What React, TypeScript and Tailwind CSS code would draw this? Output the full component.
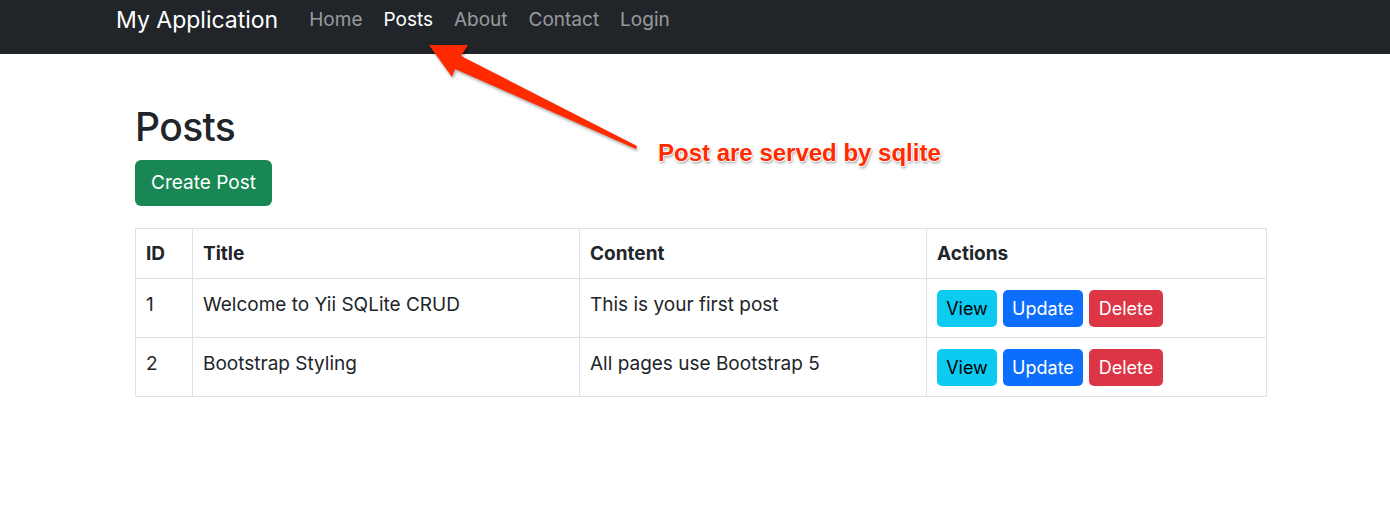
const navLinks = [
  { label: "Home", active: false },
  { label: "Posts", active: true },
  { label: "About", active: false },
  { label: "Contact", active: false },
  { label: "Login", active: false },
];

type Post = {
  id: number;
  title: string;
  content: string;
};

const posts: Post[] = [
  { id: 1, title: "Welcome to Yii SQLite CRUD", content: "This is your first post" },
  { id: 2, title: "Bootstrap Styling", content: "All pages use Bootstrap 5" },
];

const Navbar = () => (
  <nav className="h-[54px] bg-[#212529] flex items-start">
    <div className="flex items-center gap-[31px] pl-[116px] pt-[5px]">
      <span className="text-[23px] leading-[30px] text-white">My Application</span>
      <ul className="flex items-center gap-[21px] text-[19px] leading-[30px]">
        {navLinks.map((link) => (
          <li
            key={link.label}
            className={link.active ? "text-white" : "text-[#ffffff8c]"}
          >
            {link.label}
          </li>
        ))}
      </ul>
    </div>
  </nav>
);

const Annotation = () => (
  <>
    <svg
      className="absolute left-0 top-0 pointer-events-none [filter:drop-shadow(1px_2px_1.5px_rgba(0,0,0,0.35))]"
      width={1390}
      height={523}
      viewBox="0 0 1390 523"
    >
      <polygon
        points="429,45 468,45 461,56 637,146 636,149 455,69 452,77"
        fill="#ff2a00"
      />
    </svg>
    <div
      className="absolute left-[658px] top-[138px] text-[24px] leading-[30px] font-bold text-[#ff2a00] [font-family:'Liberation_Sans',Arial,sans-serif] [text-shadow:0_0_1px_#fff,1px_0_0_#fff,-1px_0_0_#fff,0_1px_0_#fff,0_-1px_0_#fff,1px_2px_3px_rgba(0,0,0,0.45)]"
    >
      Post are served by sqlite
    </div>
  </>
);

const App = () => {
  return (
    <div className="relative w-[1390px] h-[523px] bg-white text-[#212529] [font-family:Inter,'Noto_Sans',sans-serif] overflow-hidden">
      <Navbar />
      <main className="pl-[135px] pr-[124px]">
        <h1 className="mt-[49px] text-[39px] leading-[48px] font-medium tracking-[-0.6px]">
          Posts
        </h1>
        <button className="mt-[9px] h-[46px] w-[137px] rounded-[6px] bg-[#198754] text-white text-[19px]">
          Create Post
        </button>
        <table className="mt-[22px] w-[1131px] table-fixed border-collapse text-[19px] leading-[27px]">
          <colgroup>
            <col className="w-[57px]" />
            <col className="w-[387px]" />
            <col className="w-[347px]" />
            <col className="w-[340px]" />
          </colgroup>
          <thead>
            <tr>
              {["ID", "Title", "Content", "Actions"].map((h) => (
                <th
                  key={h}
                  className="border border-[#dee2e6] px-[10px] pt-[11px] pb-[11px] text-left align-top font-bold text-[19px]"
                >
                  {h}
                </th>
              ))}
            </tr>
          </thead>
          <tbody>
            {posts.map((post) => (
              <tr key={post.id}>
                <td className="border border-[#dee2e6] px-[10px] pt-[12px] pb-[9px] align-top">
                  {post.id}
                </td>
                <td className="border border-[#dee2e6] px-[10px] pt-[12px] pb-[9px] align-top">
                  {post.title}
                </td>
                <td className="border border-[#dee2e6] px-[10px] pt-[12px] pb-[9px] align-top">
                  {post.content}
                </td>
                <td className="border border-[#dee2e6] px-[10px] pt-[11px] pb-[10px] align-top">
                  <div className="flex items-center gap-[6px]">
                    <button className="h-[37px] w-[60px] rounded-[5px] bg-[#0dcaf0] text-black text-[18px]">
                      View
                    </button>
                    <button className="h-[37px] w-[80px] rounded-[5px] bg-[#0d6efd] text-white text-[18px]">
                      Update
                    </button>
                    <button className="h-[37px] w-[74px] rounded-[5px] bg-[#dc3545] text-white text-[18px]">
                      Delete
                    </button>
                  </div>
                </td>
              </tr>
            ))}
          </tbody>
        </table>
      </main>
      <Annotation />
    </div>
  );
};

export default App;
